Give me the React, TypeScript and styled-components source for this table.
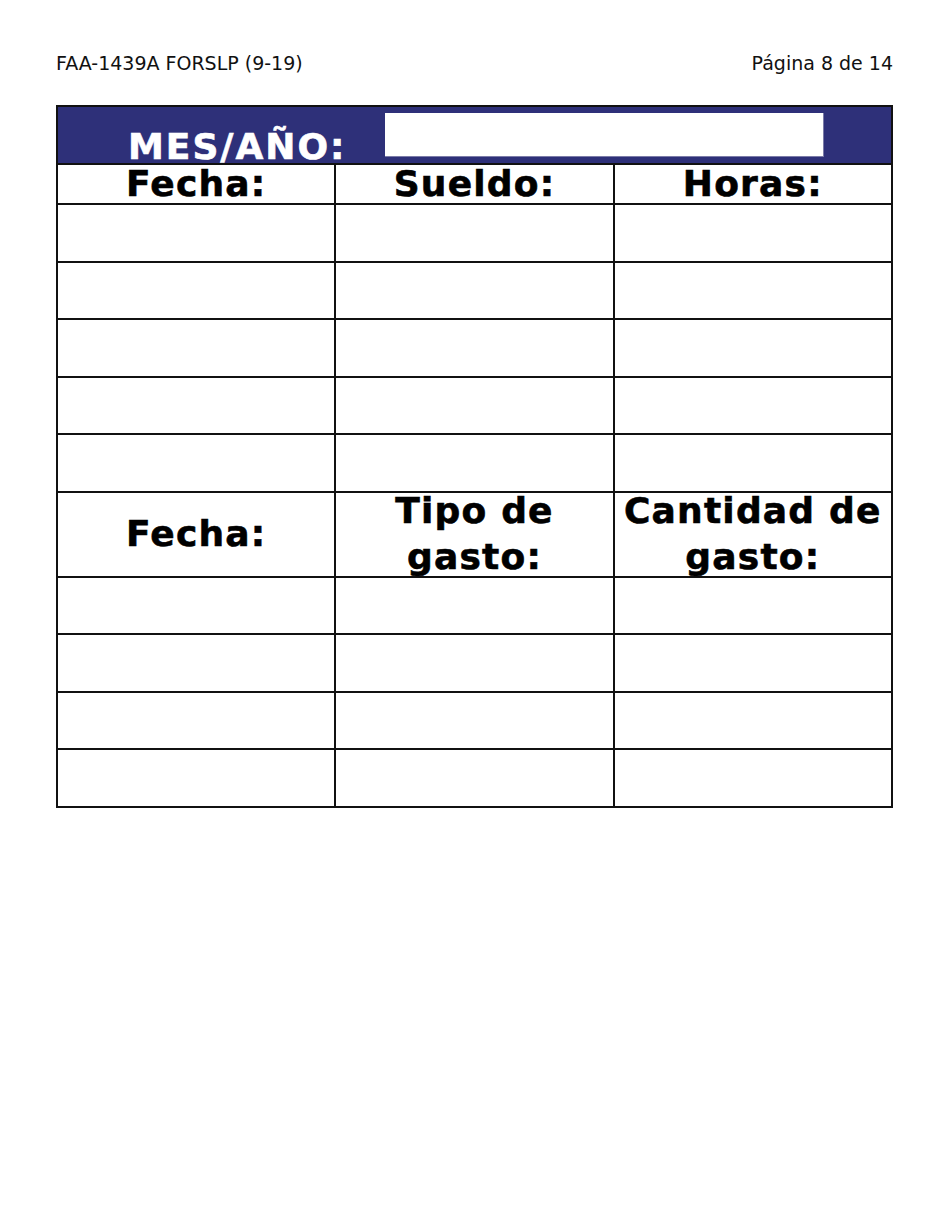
import React from "react";
import styled, { createGlobalStyle } from "styled-components";

const Global = createGlobalStyle`
  html, body { margin: 0; padding: 0; background: #ffffff; }
  body { font-family: "DejaVu Sans", Verdana, sans-serif; color: #000; }
`;

const Page = styled.div`
  width: 950px;
  box-sizing: border-box;
  padding: 51px 57px 0 56px;
`;

const TopLine = styled.div`
  display: flex;
  justify-content: space-between;
  align-items: baseline;
  font-family: "DejaVu Sans", Verdana, sans-serif;
  font-size: 19px;
  line-height: 24px;
  color: #111;
`;

const Sheet = styled.div`
  margin-top: 30px;
  display: grid;
  grid-template-columns: repeat(3, 1fr);
  gap: 2px;
  padding: 2px;
  background: #111;
`;

const Band = styled.div`
  grid-column: 1 / -1;
  height: 56px;
  background: #2e3079;
  display: flex;
  align-items: center;
`;

const BandLabel = styled.div`
  align-self: flex-end;
  padding-left: 70px;
  font-weight: 700;
  font-size: 36px;
  line-height: 36px;
  letter-spacing: 2px;
  color: #ffffff;
  -webkit-text-stroke: 0.6px #ffffff;
  margin-bottom: -2px;
`;

const MonthBox = styled.div`
  margin-left: auto;
  margin-right: 67px;
  width: 439px;
  height: 44px;
  box-sizing: border-box;
  background: #ffffff;
  border-right: 1px solid #7b7ba8;
  border-bottom: 1px solid #7b7ba8;
`;

const HeadCell = styled.div<{ $h: number }>`
  background: #ffffff;
  height: ${(p) => p.$h}px;
  display: flex;
  align-items: center;
  justify-content: center;
  text-align: center;
  font-weight: 700;
  font-size: 36px;
  line-height: 46px;
  letter-spacing: 1.2px;
  color: #000;
  -webkit-text-stroke: 0.6px #000;
  overflow: visible;
`;

const Cell = styled.div`
  background: #ffffff;
  height: 55.5px;
`;

const rowsA = [0, 1, 2, 3, 4];
const rowsB = [0, 1, 2, 3];

export default function App() {
  return (
    <Page>
      <Global />
      <TopLine>
        <span>FAA-1439A FORSLP (9-19)</span>
        <span>Página 8 de 14</span>
      </TopLine>
      <Sheet>
        <Band>
          <BandLabel>MES/AÑO:</BandLabel>
          <MonthBox />
        </Band>
        <HeadCell $h={38}>Fecha:</HeadCell>
        <HeadCell $h={38}>Sueldo:</HeadCell>
        <HeadCell $h={38}>Horas:</HeadCell>
        {rowsA.map((r) => (
          <React.Fragment key={`a${r}`}>
            <Cell />
            <Cell />
            <Cell />
          </React.Fragment>
        ))}
        <HeadCell $h={83}>Fecha:</HeadCell>
        <HeadCell $h={83}>
          Tipo de
          <br />
          gasto:
        </HeadCell>
        <HeadCell $h={83}>
          Cantidad de
          <br />
          gasto:
        </HeadCell>
        {rowsB.map((r) => (
          <React.Fragment key={`b${r}`}>
            <Cell />
            <Cell />
            <Cell />
          </React.Fragment>
        ))}
      </Sheet>
    </Page>
  );
}
